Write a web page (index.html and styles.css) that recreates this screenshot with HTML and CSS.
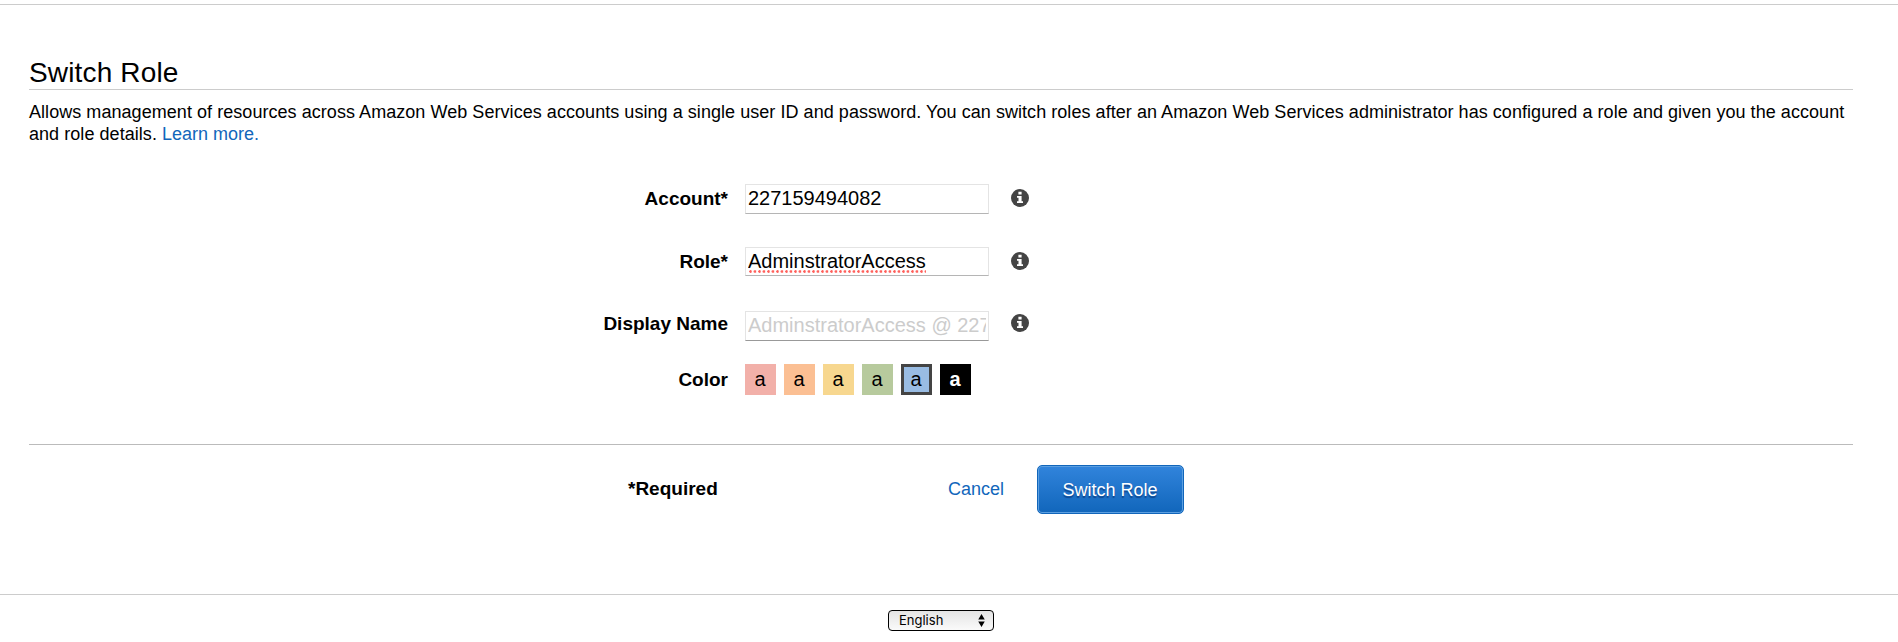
FILE: index.html
```html
<!DOCTYPE html>
<html lang="en">
<head>
<meta charset="utf-8">
<title>Switch Role</title>
<link rel="stylesheet" href="styles.css">
</head>
<body>
<svg class="defs" aria-hidden="true">
  <symbol id="info" viewBox="0 0 18 18">
    <circle cx="9" cy="9" r="9" fill="#444"/>
    <path fill="#fff" d="M7.4 2.8h3.2v2.7H7.4zM6 6.9h4.6v5.3H12v1.9H6v-1.9h1.5V8.7H6z"/>
  </symbol>
</svg>
<main class="page">
  <h1 class="title">Switch Role</h1>
  <p class="intro">Allows management of resources across Amazon Web Services accounts using a single user ID and password. You can switch roles after an Amazon Web Services administrator has configured a role and given you the account and role details. <a class="link" href="#">Learn more.</a></p>
  <form class="form">
    <div class="row row-account">
      <label class="label" for="account">Account*</label>
      <div class="field"><input class="input" id="account" value="227159494082"></div>
      <svg class="info"><use href="#info"/></svg>
    </div>
    <div class="row row-role">
      <label class="label" for="role">Role*</label>
      <div class="field"><input class="input input-role" id="role" value="AdminstratorAccess" spellcheck="false"><span class="squiggle"></span></div>
      <svg class="info"><use href="#info"/></svg>
    </div>
    <div class="row row-display">
      <label class="label" for="display">Display Name</label>
      <div class="field"><input class="input input-display" id="display" placeholder="AdminstratorAccess @ 227159494082"></div>
      <svg class="info"><use href="#info"/></svg>
    </div>
    <div class="row row-color">
      <span class="label">Color</span>
      <div class="swatches">
        <span class="swatch red">a</span>
        <span class="swatch orange">a</span>
        <span class="swatch yellow">a</span>
        <span class="swatch green">a</span>
        <span class="swatch blue selected">a</span>
        <span class="swatch black">a</span>
      </div>
    </div>
  </form>
  <div class="actions">
    <span class="required">*Required</span>
    <a class="link cancel" href="#">Cancel</a>
    <button class="submit" type="button">Switch Role</button>
  </div>
</main>
<footer class="footer">
  <div class="language">
    <span>English</span>
    <svg class="arrows" viewBox="0 0 6 12"><path d="M3 0l3 5H0zM3 12l3-5H0z"/></svg>
  </div>
</footer>
</body>
</html>
```
FILE: styles.css
```css
* { box-sizing: border-box; }
body {
  margin: 0;
  height: 642px;
  overflow: hidden;
  background: #fff;
  color: #000;
  font: 18px/22px "Liberation Sans", Arial, sans-serif;
  padding-top: 4px;
}
.defs { display: none; }
.page {
  height: 590px;
  border-top: 1px solid #ccc;
  padding: 50px 45px 0 29px;
}
.title {
  margin: 0;
  height: 35px;
  padding-top: 2px;
  border-bottom: 1px solid #ccc;
  font-size: 28px;
  line-height: 32px;
  font-weight: 400;
  letter-spacing: .15px;
}
.intro { margin: 11px 0 0; height: 44px; letter-spacing: .051px; }
.link { color: #1166bb; text-decoration: none; letter-spacing: 0; }
.form {
  height: 300px;
  padding-top: 39px;
  border-bottom: 1px solid #bbb;
}
.row { display: flex; align-items: flex-start; }
.row-account { height: 63px; }
.row-role { height: 63px; }
.row-display { height: 54px; }
.label {
  width: 699px;
  margin-right: 17px;
  padding-top: 4px;
  text-align: right;
  font-size: 19px;
  font-weight: 700;
}
.row-display .label { padding-top: 3px; }
.field { position: relative; width: 244px; }
.input {
  display: block;
  width: 244px;
  height: 30px;
  margin: 0;
  padding: 0 2px 1px 2px;
  border: 1px solid #e4e4e4;
  border-bottom-color: #b5b5b5;
  outline: 0;
  background: #fff;
  color: #000;
  font: 20px "Liberation Sans", Arial, sans-serif;
}
.input-role { height: 29px; }
.input-display { margin-top: 1px; border-bottom-color: #999; }
.input::placeholder { color: #ccc; opacity: 1; }
.squiggle {
  position: absolute;
  left: 4px;
  top: 23px;
  width: 177px;
  height: 3px;
  background: radial-gradient(circle at 1.5px 1.5px, #ff5f5a 1px, transparent 1.6px) 0 0 / 4.5px 3px;
}
.info { width: 18px; height: 18px; margin: 5px 0 0 21.5px; }
.row-role .info { margin-top: 4.5px; }
.row-display .info { margin-top: 4px; }
.row-color .label { padding-top: 5px; }
.swatches { display: flex; gap: 8px; }
.swatch {
  width: 31px;
  height: 31px;
  padding-right: 1px;
  font-size: 20px;
  line-height: 31px;
  text-align: center;
}
.red { background: #f2b0a9; }
.orange { background: #fbbf93; }
.yellow { background: #f7d78f; }
.green { background: #b7ca9d; }
.blue { background: #99bce3; }
.black { background: #000; color: #fff; font-weight: 700; }
.selected { border: 3px solid #444; line-height: 25px; }
.actions { display: flex; align-items: flex-start; padding: 20px 0 0 599px; }
.required { width: 320px; padding-top: 13px; font-size: 19px; font-weight: 700; }
.cancel { width: 89px; padding-top: 13px; }
.submit {
  width: 147px;
  height: 49px;
  padding: 2px 1px 0 0;
  border: 1px solid #1166bb;
  border-radius: 5px;
  background: linear-gradient(#3184dc, #1166bb);
  box-shadow: inset 0 0 0 1px #5c9fe0;
  color: #fff;
  font: 18px "Liberation Sans", Arial, sans-serif;
  text-shadow: 0 2px 1px rgba(0, 30, 90, .5);
}
.footer {
  height: 48px;
  border-top: 1px solid #ccc;
  padding: 15px 0 0 888px;
}
.language {
  display: flex;
  justify-content: space-between;
  align-items: center;
  width: 106px;
  height: 21px;
  padding: 0 8px 1px 10px;
  border: 1px solid #000;
  border-radius: 4px;
  background: linear-gradient(#e4e4e4, #fafafa);
  font: 13px Inter, sans-serif;
}
.arrows { width: 7px; height: 13px; }
```
